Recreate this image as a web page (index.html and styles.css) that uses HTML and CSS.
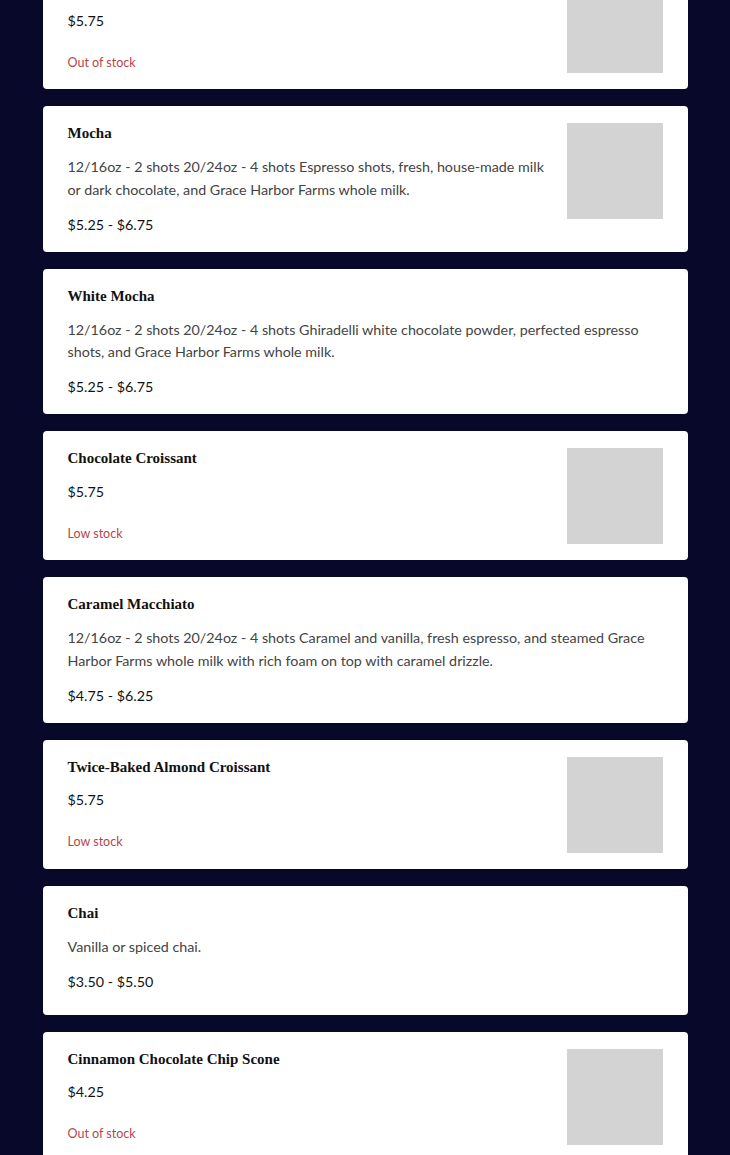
FILE: index.html
```html
<!DOCTYPE html>
<html lang="en">
<head>
<meta charset="utf-8">
<title>Menu</title>
<link rel="stylesheet" href="styles.css">
</head>
<body>
<main class="menu">
  <article class="card">
    <div class="info">
      <h3 class="name">Butter Croissant</h3>
      <p class="price">$5.75</p>
      <p class="stock">Out of stock</p>
    </div>
    <div class="thumb"></div>
  </article>
  <article class="card">
    <div class="info">
      <h3 class="name">Mocha</h3>
      <p class="desc">12/16oz - 2 shots 20/24oz - 4 shots Espresso shots, fresh, house-made milk or dark chocolate, and Grace Harbor Farms whole milk.</p>
      <p class="price">$5.25 - $6.75</p>
    </div>
    <div class="thumb"></div>
  </article>
  <article class="card">
    <div class="info">
      <h3 class="name">White Mocha</h3>
      <p class="desc">12/16oz - 2 shots 20/24oz - 4 shots Ghiradelli white chocolate powder, perfected espresso shots, and Grace Harbor Farms whole milk.</p>
      <p class="price">$5.25 - $6.75</p>
    </div>
  </article>
  <article class="card">
    <div class="info">
      <h3 class="name">Chocolate Croissant</h3>
      <p class="price">$5.75</p>
      <p class="stock">Low stock</p>
    </div>
    <div class="thumb"></div>
  </article>
  <article class="card">
    <div class="info">
      <h3 class="name">Caramel Macchiato</h3>
      <p class="desc">12/16oz - 2 shots 20/24oz - 4 shots Caramel and vanilla, fresh espresso, and steamed Grace Harbor Farms whole milk with rich foam on top with caramel drizzle.</p>
      <p class="price">$4.75 - $6.25</p>
    </div>
  </article>
  <article class="card">
    <div class="info">
      <h3 class="name">Twice-Baked Almond Croissant</h3>
      <p class="price">$5.75</p>
      <p class="stock">Low stock</p>
    </div>
    <div class="thumb"></div>
  </article>
  <article class="card">
    <div class="info">
      <h3 class="name">Chai</h3>
      <p class="desc">Vanilla or spiced chai.</p>
      <p class="price">$3.50 - $5.50</p>
    </div>
  </article>
  <article class="card">
    <div class="info">
      <h3 class="name">Cinnamon Chocolate Chip Scone</h3>
      <p class="price">$4.25</p>
      <p class="stock">Out of stock</p>
    </div>
    <div class="thumb"></div>
  </article>
</main>
</body>
</html>
```
FILE: styles.css
```css
html, body {
  margin: 0;
  padding: 0;
  background: #08082a;
}
body {
  font-family: "Lato", "Liberation Sans", sans-serif;
  color: #111;
}
.menu {
  width: 645px;
  margin: -40px auto 0;
  display: flex;
  flex-direction: column;
  gap: 17px;
}
.card {
  background: #fff;
  border-radius: 4px;
  padding: 17px 25px 16px;
  min-height: 96px;
  display: flex;
  gap: 14px;
  align-items: flex-start;
}
.info {
  flex: 1;
  min-width: 0;
}
.thumb {
  width: 96px;
  height: 96px;
  background: #d3d3d3;
  flex: none;
}
.name {
  margin: 0;
  font-family: "Liberation Serif", serif;
  font-weight: bold;
  font-size: 15px;
  line-height: 20px;
  color: #111;
}
.desc {
  margin: 13px 0 0;
  font-size: 14.3px;
  line-height: 22.5px;
  color: #444;
}
.price {
  margin: 12.5px 0 0;
  font-size: 14.3px;
  line-height: 22px;
  color: #111;
}
.stock {
  margin: 21px 0 0;
  font-size: 12.5px;
  line-height: 20px;
  color: #b4464b;
}
```
